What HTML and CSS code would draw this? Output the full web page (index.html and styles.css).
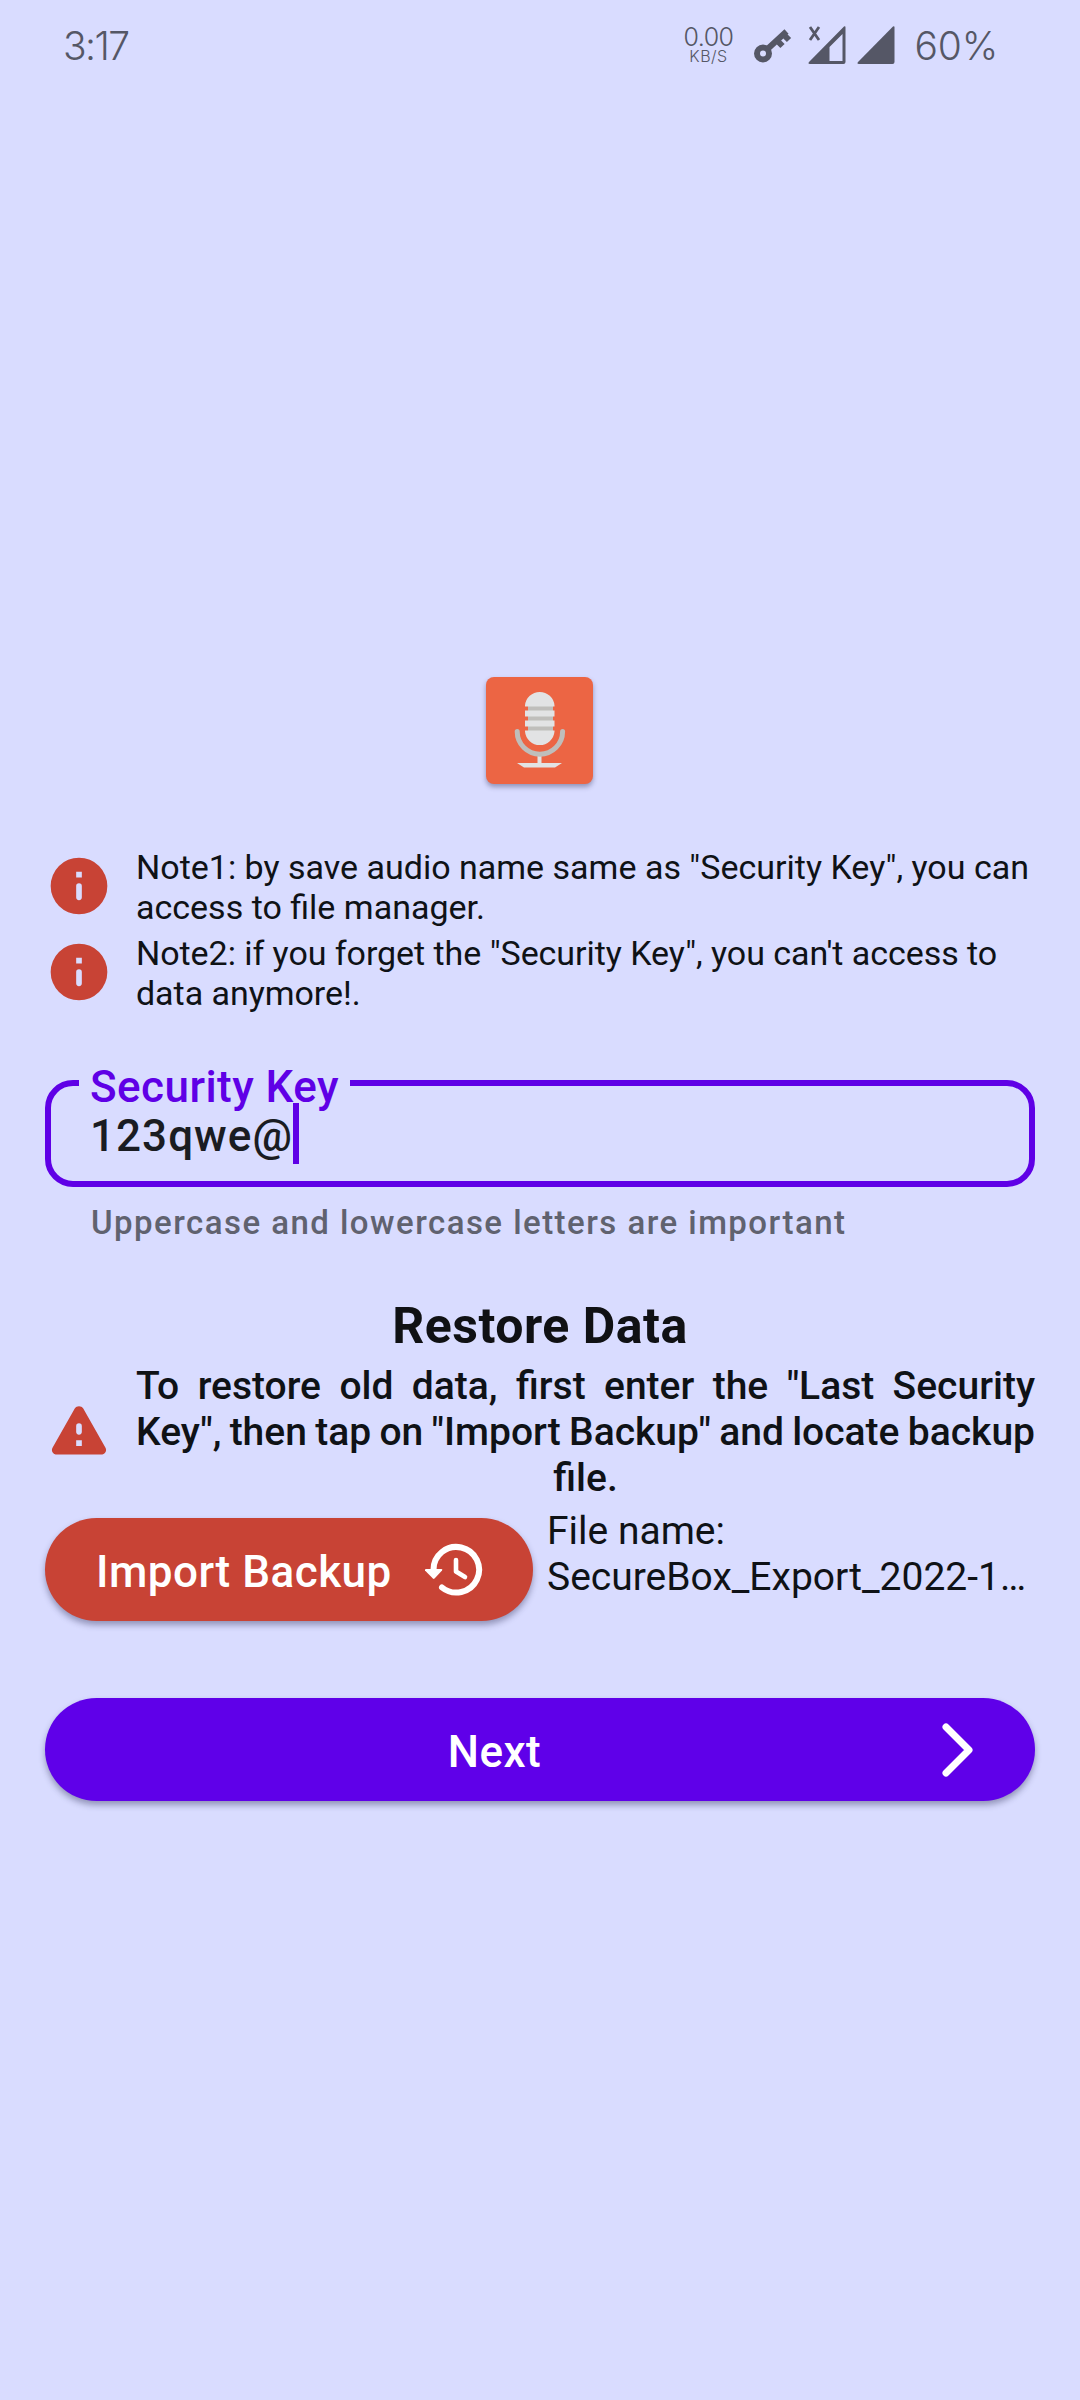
FILE: index.html
```html
<!DOCTYPE html>
<html lang="en">
<head>
<meta charset="utf-8">
<title>Security Key</title>
<link rel="stylesheet" href="styles.css">
</head>
<body>
<header class="status">
  <span class="time">3:17</span>
  <div class="status-right">
    <div class="speed"><span class="rate">0.00</span><span class="unit">KB/S</span></div>
    <svg class="key" viewBox="0 0 40 34" width="40" height="34"><g fill="none" stroke="#555766"><circle cx="9" cy="24.500" r="6" stroke-width="6"/><path d="M13.500 20 32.500 2.500M29 5l6 6M23.500 12l5 5" stroke-width="6"/></g></svg>
    <svg class="sig1" viewBox="0 0 38 38" width="38" height="38"><path fill="#555766" fill-rule="evenodd" d="M36 0.500q1.500-1 1.500 1v34.500q0 2-2 2H2q-2.500 0-1-2zM34.500 8 21.500 21v14h13z"/><path d="M2 1l9 13M11 1l-9 13" stroke="#555766" stroke-width="2.800"/></svg>
    <svg class="sig2" viewBox="0 0 38 38" width="38" height="38"><path fill="#555766" d="M36 0.500q1.500-1 1.500 1v34.500q0 2-2 2H2q-2.500 0-1-2z"/></svg>
    <span class="battery">60%</span>
  </div>
</header>
<main class="page">
  <div class="logo">
    <svg viewBox="0 0 107 107" width="107" height="107">
      <path fill="#bfbebb" d="M42 28h25v28H42z"/>
      <path fill="#e2e3e4" d="M39 29.500v-1a14.800 14.800 0 0 1 29.500 0v1zM39 33.500h29.500v6H39zM39 43.500h29.500v6H39zM39 53.500h29.500v1a14.800 14.800 0 0 1-29.500 0zM51.500 79h4v7H76l-7 4.500H38L31 86h20.500z"/>
      <path fill="none" stroke="#bfbebb" stroke-width="5" stroke-linecap="round" d="M31.200 54.500a22.700 22.700 0 0 0 45.400 0"/>
    </svg>
  </div>
  <section class="notes">
    <div class="note">
      <svg class="info" viewBox="0 0 24 24" width="68" height="68"><path fill="#c84335" fill-rule="evenodd" d="M12 2a10 10 0 1 0 0 20 10 10 0 0 0 0-20zm0 15q-1 0-1-1v-4q0-1 1-1t1 1v4q0 1-1 1zm1-8h-2V7h2z"/></svg>
      <p>Note1: by save audio name same as "Security Key", you can access to file manager.</p>
    </div>
    <div class="note note-tight">
      <svg class="info" viewBox="0 0 24 24" width="68" height="68"><path fill="#c84335" fill-rule="evenodd" d="M12 2a10 10 0 1 0 0 20 10 10 0 0 0 0-20zm0 15q-1 0-1-1v-4q0-1 1-1t1 1v4q0 1-1 1zm1-8h-2V7h2z"/></svg>
      <p>Note2: if you forget the "Security Key", you can't access to data anymore!.</p>
    </div>
  </section>
  <fieldset class="field">
    <legend>Security Key</legend>
    <div class="value"><span>123qwe@</span><i class="caret"></i></div>
  </fieldset>
  <p class="helper">Uppercase and lowercase letters are important</p>
  <h1>Restore Data</h1>
  <div class="warning">
    <svg viewBox="0 0 24 24" width="68" height="68"><path fill="#c84335" fill-rule="evenodd" d="M4.300 21h15.400c1.500 0 2.300-1.300 1.600-2.500L13.500 4.800c-.7-1.100-2.300-1.100-3 0L2.700 18.500C2 19.700 2.800 21 4.300 21zM12 14q-1 0-1-1v-2q0-1 1-1t1 1v2q0 1-1 1zm1 4h-2v-2h2z"/></svg>
    <p>
      <span class="line">To restore old data, first enter the "Last Security</span>
      <span class="line line-tight">Key", then tap on "Import Backup" and locate backup</span>
      <span class="line line-last">file.</span>
    </p>
  </div>
  <div class="import-row">
    <button class="btn import"><span class="label">Import Backup</span>
      <svg viewBox="0 0 60 54" width="60" height="54"><g fill="none" stroke="#fff" stroke-linecap="round"><path d="M10.500 27a22.800 22.800 0 1 1 8.500 17.500" stroke-width="6"/><path d="M33 17v11.500l9 5.500" stroke-width="4.600" stroke-linejoin="round"/></g><path fill="#fff" d="M3 26h15.500q1.500.2.500 1.500l-7.500 8q-.8.800-1.600 0L2 27.500Q1.500 26 3 26z"/></svg>
    </button>
    <div class="file"><div>File name:</div><div>SecureBox_Export_2022-1…</div></div>
  </div>
  <button class="btn next"><span class="label next-label">Next</span>
    <svg viewBox="0 0 32 54" width="32" height="54"><path d="M4 4l23 23L4 50" fill="none" stroke="#fff" stroke-width="7" stroke-linecap="round" stroke-linejoin="round"/></svg>
  </button>
</main>
</body>
</html>
```
FILE: styles.css
```css
* { box-sizing: border-box; }
body { margin: 0; height: 2400px; background: #d9dcff; color: #0f1216; font-family: Roboto, sans-serif; overflow: hidden; }
p, h1 { margin: 0; }
svg { display: block; flex: none; }

.status { height: 90px; padding: 0 82px 0 63px; display: flex; justify-content: space-between; color: #555766; font-family: Inter, "Liberation Sans", sans-serif; font-weight: 300; }
.time { font-size: 39px; line-height: 48px; margin-top: 22px; letter-spacing: -1.6px; }
.status-right { display: flex; align-items: flex-start; }
.speed { display: flex; flex-direction: column; align-items: center; padding-top: 25px; width: 50px; margin-right: 20px; }
.rate { font-size: 25px; line-height: 25px; letter-spacing: -.5px; }
.unit { font-size: 16px; line-height: 13px; letter-spacing: .5px; }
.key { margin: 29px 14px 0 0; }
.sig1 { margin: 26px 11px 0 0; }
.sig2 { margin: 26px 20px 0 0; }
.battery { font-size: 39px; line-height: 48px; margin-top: 22px; letter-spacing: -.2px; }

.page { padding: 587px 45px 0; display: flex; flex-direction: column; }
.logo { width: 107px; height: 107px; margin-right: 1px; align-self: center; border-radius: 8px; background: #ec6544; box-shadow: 0 3px 5px rgba(40, 40, 80, .4); }
.notes { margin-top: 63px; display: flex; flex-direction: column; gap: 6px; }
.note { display: flex; align-items: center; gap: 23px; height: 80px; }
.note p { font-size: 34px; line-height: 40px; }
.note-tight p { letter-spacing: -.05px; }
.info { margin-bottom: 2px; }

.field { margin: 42px 0 0; padding: 0 39px; height: 132px; border: 6px solid #5f00e6; border-radius: 28px; min-width: 0; }
.field legend { padding: 8px 11px 0; margin-left: -11px; color: #5f00e6; font-size: 44px; line-height: 48px; font-weight: 500; letter-spacing: .45px; }
.value { display: flex; align-items: center; height: 61px; margin-top: -8px; font-size: 44px; font-weight: 500; letter-spacing: 1.05px; color: #1a1c22; }
.value span { padding-top: 4px; }
.caret { width: 6px; height: 61px; background: #5f00e6; }
.helper { margin: 16px 0 0 46px; font-size: 33px; line-height: 40px; font-weight: 500; color: #60626f; letter-spacing: 1.46px; }

h1 { margin-top: 54px; text-align: center; font-size: 50px; line-height: 58px; font-weight: 700; letter-spacing: .5px; color: #101114; }
.warning { display: flex; align-items: center; gap: 23px; margin-top: 8px; }
.warning svg { margin-bottom: 6px; }
.warning p { flex: 1; font-size: 39px; line-height: 46px; font-weight: 500; }
.line { display: block; white-space: nowrap; text-align-last: justify; }
.line-tight { word-spacing: -4px; }
.line-last { text-align-last: center; }

.btn { display: flex; align-items: center; height: 103px; border: 0; border-radius: 52px; color: #fff; font: 500 44px/52px Roboto, sans-serif; letter-spacing: .5px; box-shadow: 0 4px 6px rgba(40, 40, 80, .4); }
.label { padding-top: 4px; }
.import-row { display: flex; align-items: flex-start; margin-top: 7px; gap: 14px; }
.import { flex: none; width: 488px; margin-top: 10px; padding: 0 50px 0 51px; background: #c84335; justify-content: space-between; }
.file { font-size: 39px; line-height: 46px; }
.next { margin-top: 77px; padding: 0 61px 0 2px; background: #5f00e9; }
.next-label { flex: 1; text-align: center; }
```
